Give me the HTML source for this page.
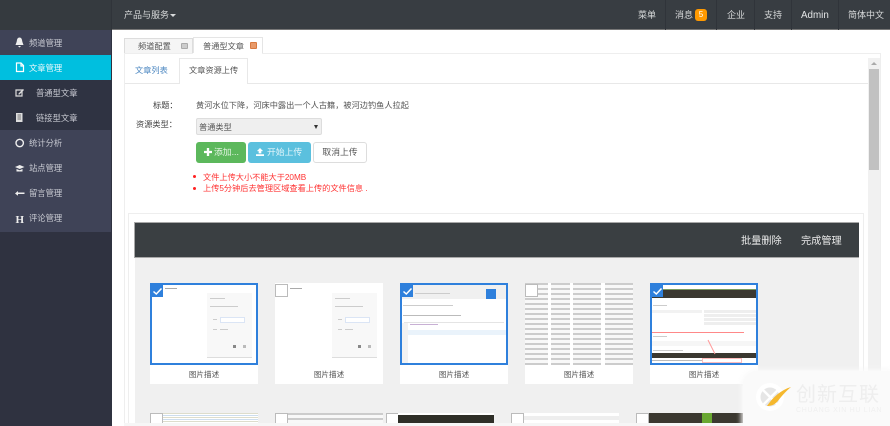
<!DOCTYPE html>
<html lang="zh"><head><meta charset="utf-8">
<style>
html,body{margin:0;padding:0}
body{width:890px;height:426px;overflow:hidden;background:#fff;position:relative;font-family:"Liberation Sans","Noto Sans CJK SC",sans-serif;font-size:8.2px;color:#555}
div,span{position:absolute;box-sizing:border-box;white-space:nowrap}
svg{position:absolute;overflow:visible}
.top{top:1px;height:30px;line-height:29px;color:#d8dadb;font-size:9px}
.sep{top:0;width:1px;height:30px;background:#30343a}
.m{left:0;width:111px;height:25px;background:#3f4357;color:#c8cad2;line-height:25px;font-size:8.3px}
.m.sub{background:#2f3342}
.m .t{left:29px;top:1px}
.m.sub .t{left:36px}
.card{width:108px;height:82px;background:#fff;top:283px}
.cap{top:365px;width:108px;height:19px;background:#fff;text-align:center;line-height:20px;font-size:7.6px;color:#555}
.sel{border:2px solid #2f80dc}
.ck{width:13px;height:13px;top:284px;background:#fff;border:1px solid #bbb}
.ckb{width:13px;height:13px;top:284px;background:#2f80dc}
.li{height:1px;background:#ccc}
.f{font-size:8.2px;line-height:14px}
</style></head><body>

<!-- top bar -->
<div style="left:0;top:0;width:890px;height:30px;background:#383d42;border-bottom:1px solid #777"></div>
<div style="left:0;top:0;width:111px;height:30px;background:#353a3f"></div>
<div style="left:111px;top:0;width:1px;height:30px;background:#30343a"></div>
<div class="top" style="left:124px">产品与服务</div>
<div style="left:170px;top:14px;width:0;height:0;border-left:3px solid transparent;border-right:3px solid transparent;border-top:3px solid #d8dadb"></div>
<div class="top" style="left:638px">菜单</div>
<div class="sep" style="left:665px"></div>
<div class="top" style="left:675px">消息</div>
<div style="left:695px;top:9px;width:12px;height:12px;background:#f90;border-radius:3px;color:#fff;font-size:8px;line-height:12px;text-align:center">5</div>
<div class="sep" style="left:716px"></div>
<div class="top" style="left:727px">企业</div>
<div class="sep" style="left:754px"></div>
<div class="top" style="left:764px">支持</div>
<div class="sep" style="left:791px"></div>
<div class="top" style="left:801px;font-size:9.8px;color:#e4e6e7">Admin</div>
<div class="sep" style="left:838px"></div>
<div class="top" style="left:848px">简体中文</div>

<!-- sidebar -->
<div style="left:0;top:30px;width:112px;height:396px;background:#2f3240"></div>
<div class="m" style="top:30px"><span class="t">频道管理</span></div>
<div class="m" style="top:55px;background:#00bfdf;color:#eaf8fb"><span class="t">文章管理</span></div>
<div class="m sub" style="top:80px"><span class="t">普通型文章</span></div>
<div class="m sub" style="top:105px"><span class="t">链接型文章</span></div>
<div class="m" style="top:130px"><span class="t">统计分析</span></div>
<div class="m" style="top:155px"><span class="t">站点管理</span></div>
<div class="m" style="top:180px"><span class="t">留言管理</span></div>
<div class="m" style="top:205px;height:27px"><span class="t">评论管理</span></div>

<svg style="left:0;top:0" width="30" height="232" viewBox="0 0 30 232">
<path d="M19.5 37.5c1.6 0 2.4 1.4 2.600 3 .2 1.800 1 3.200 1.400 4.500h-8c.4-1.300 1.200-2.700 1.400-4.500.2-1.600 1-3 2.600-3zM18 46h3l-1.500 1.500z" fill="#eee"/>
<path d="M16.500 63h4.500l2.500 2.500V71.500h-7zM21 63v3h2.500" fill="none" stroke="#fff" stroke-width="1.200"/>
<path d="M16 90h6v6h-6z" fill="none" stroke="#ddd" stroke-width="1.200"/><path d="M18.500 93.500l4.500-4.500 1 1-4.500 4.500h-1z" fill="#ddd"/>
<path d="M16 113h6.500v9H16z" fill="#ddd"/><path d="M17.500 115h3.500M17.500 117h3.500M17.500 119h3.500" stroke="#555" stroke-width=".7"/>
<circle cx="19.700" cy="143" r="3.700" fill="none" stroke="#eee" stroke-width="1.400"/>
<path d="M15 167l4.700-2 4.800 2-4.800 2zM16.500 169v2.500h6V169l-2.800 1.200z" fill="#eee"/>
<path d="M15 193.500l3-2.500v1.500h6.500v1.500H18v1.700z" fill="#eee"/>
<text x="15.500" y="223" font-family="Liberation Serif" font-weight="bold" font-size="11" fill="#eee">H</text>
</svg>

<!-- tabs -->
<div style="left:124px;top:38px;width:69px;height:15px;background:#f5f5f5;border:1px solid #ddd;border-bottom:0"></div>
<div style="left:138px;top:39px;line-height:15px;font-size:8.2px;color:#555">频道配置</div>
<div style="left:181px;top:43px;width:7px;height:6px;background:#ccc;border:1px solid #aaa;border-radius:1px"></div>
<div style="left:193px;top:37px;width:70px;height:17px;background:#fff;border:1px solid #e5e5e5;border-bottom:0"></div>
<div style="left:203px;top:39px;line-height:15px;font-size:8.2px;color:#555">普通型文章</div>
<div style="left:250px;top:42px;width:7px;height:7px;background:#e89a6a;border:1px solid #d87a40;border-radius:1px"></div>

<!-- panel -->
<div style="left:124px;top:53px;width:757px;height:373px;border:1px solid #eee;border-bottom:0;background:#fff"></div>
<div style="left:193px;top:53px;width:69px;height:1px;background:#fff"></div>
<div style="left:125px;top:83px;width:743px;height:1px;background:#e8e8e8"></div>
<div class="f" style="left:135px;top:64px;color:#4a86c0">文章列表</div>
<div style="left:179px;top:58px;width:69px;height:26px;background:#fff;border:1px solid #e8e8e8;border-bottom:0"></div>
<div class="f" style="left:189px;top:64px;color:#555">文章资源上传</div>

<!-- scrollbar -->
<div style="left:868px;top:58px;width:12px;height:368px;background:#f1f1f1"></div>
<div style="left:869px;top:69px;width:10px;height:101px;background:#c1c1c1"></div>
<div style="left:871px;top:62px;width:0;height:0;border-left:3px solid transparent;border-right:3px solid transparent;border-bottom:3px solid #aaa"></div>

<!-- form -->
<div class="f" style="left:153px;top:99px;color:#444">标题：</div>
<div class="f" style="left:196px;top:99px;color:#555">黄河水位下降，河床中露出一个人古籍，被河边钓鱼人拉起</div>
<div class="f" style="left:136px;top:118px;color:#444">资源类型：</div>
<div style="left:196px;top:118px;width:126px;height:17px;background:#efefef;border:1px solid #ddd;border-radius:2px;padding-left:2px;line-height:17px;font-size:8.2px;color:#555">普通类型</div>
<div style="left:314px;top:125px;width:0;height:0;border-left:2px solid transparent;border-right:2px solid transparent;border-top:4px solid #333"></div>
<div style="left:196px;top:142px;width:50px;height:21px;background:#5cb85c;border-radius:3px;color:#e6f5e6;font-size:8.8px;line-height:21px;padding-left:18px">添加...</div>
<svg style="left:204px;top:148px" width="8" height="8" viewBox="0 0 9 9"><path d="M3.200 0h2.600v3.200H9v2.600H5.800V9H3.200V5.800H0V3.200h3.200z" fill="#fff"/></svg>
<div style="left:248px;top:142px;width:63px;height:21px;background:#5bc0de;border-radius:3px;color:#e6f6fb;font-size:8.8px;line-height:21px;padding-left:19px">开始上传</div>
<svg style="left:256px;top:148px" width="8" height="8" viewBox="0 0 9 9"><path d="M4.500 0L8 3.500H6V6H3V3.500H1zM0 7h9v2H0z" fill="#fff"/></svg>
<div style="left:313px;top:142px;width:54px;height:21px;background:#fff;border:1px solid #ddd;border-radius:3px;color:#555;font-size:8.8px;line-height:19px;text-align:center">取消上传</div>
<div style="left:193px;top:175px;width:3px;height:3px;background:#f22;border-radius:50%"></div>
<div style="left:193px;top:187px;width:3px;height:3px;background:#f22;border-radius:50%"></div>
<div class="f" style="left:203px;top:171px;color:#f33">文件上传大小不能大于20MB</div>
<div class="f" style="left:203px;top:182px;color:#f33">上传5分钟后去管理区域查看上传的文件信息 .</div>

<!-- manager -->
<div style="left:128px;top:213px;width:736px;height:213px;border:1px solid #eee;background:#fff"></div>
<div style="left:135px;top:258px;width:724px;height:165px;background:#f0f0f0"></div>
<div style="left:134px;top:222px;width:725px;height:36px;background:#3a3f42;border:1px solid #a8a8a8;border-right:0"></div>
<div style="left:741px;top:234px;line-height:15px;font-size:10.2px;color:#e8e8e8">批量删除</div>
<div style="left:801px;top:234px;line-height:15px;font-size:10.2px;color:#e8e8e8">完成管理</div>

<!-- card 1 -->
<div class="card sel" style="left:150px"></div>
<div class="li" style="left:165px;top:288px;width:12px;background:#aaa"></div>
<div style="left:207px;top:293px;width:45px;height:65px;background:#f8f8f8;border-bottom:1px solid #ddd"></div>
<div class="li" style="left:210px;top:298px;width:15px"></div>
<div class="li" style="left:210px;top:306px;width:28px"></div>
<div style="left:220px;top:317px;width:25px;height:6px;background:#fff;border:1px solid #dbe5f5"></div>
<div class="li" style="left:213px;top:319px;width:4px"></div>
<div class="li" style="left:213px;top:329px;width:4px"></div>
<div class="li" style="left:220px;top:329px;width:8px"></div>
<div style="left:233px;top:345px;width:3px;height:3px;background:#888"></div>
<div style="left:243px;top:345px;width:3px;height:3px;background:#bbb"></div>
<div class="ckb" style="left:150px"></div>
<svg style="left:153px;top:288px" width="9" height="7"><path d="M.5 3.500l2.800 2.500L8.500.5" fill="none" stroke="#fff" stroke-width="1.500"/></svg>
<div class="cap" style="left:150px">图片描述</div>

<!-- card 2 -->
<div class="card" style="left:275px"></div>
<div class="li" style="left:290px;top:288px;width:12px;background:#aaa"></div>
<div style="left:332px;top:293px;width:45px;height:65px;background:#f8f8f8;border-bottom:1px solid #ddd"></div>
<div class="li" style="left:335px;top:298px;width:15px"></div>
<div class="li" style="left:335px;top:306px;width:28px"></div>
<div style="left:345px;top:317px;width:25px;height:6px;background:#fff;border:1px solid #dbe5f5"></div>
<div class="li" style="left:338px;top:319px;width:4px"></div>
<div class="li" style="left:338px;top:329px;width:4px"></div>
<div class="li" style="left:345px;top:329px;width:8px"></div>
<div style="left:358px;top:345px;width:3px;height:3px;background:#888"></div>
<div style="left:368px;top:345px;width:3px;height:3px;background:#bbb"></div>
<div class="ck" style="left:275px"></div>
<div class="cap" style="left:275px">图片描述</div>

<!-- card 3 -->
<div class="card sel" style="left:400px"></div>
<div style="left:402px;top:285px;width:104px;height:14px;background:#f0f0f0"></div>
<div style="left:486px;top:289px;width:10px;height:10px;background:#2f80dc"></div>
<div class="li" style="left:415px;top:293px;width:35px"></div>
<div class="li" style="left:403px;top:305px;width:50px"></div>
<div class="li" style="left:403px;top:315px;width:58px;background:#bbb"></div>
<div style="left:404px;top:322px;width:100px;height:1px;background:#e4e4e4"></div>
<div style="left:403px;top:330px;width:103px;height:5px;background:#eaf3fb"></div>
<div style="left:402px;top:323px;width:6px;height:40px;background:#f2f2f2"></div>
<div class="li" style="left:410px;top:324px;width:28px;background:#c8b0d4"></div>
<div class="ckb" style="left:400px"></div>
<svg style="left:403px;top:288px" width="9" height="7"><path d="M.5 3.500l2.800 2.500L8.500.5" fill="none" stroke="#fff" stroke-width="1.500"/></svg>
<div class="cap" style="left:400px">图片描述</div>

<!-- card 4 -->
<div class="card" style="left:525px;background:repeating-linear-gradient(180deg,#ccc 0 2px,#f8f8f8 2px 5px)"></div>
<div style="left:548px;top:283px;width:3px;height:82px;background:#fff"></div>
<div style="left:570px;top:283px;width:3px;height:82px;background:#fff"></div>
<div style="left:601px;top:283px;width:4px;height:82px;background:#fff"></div>
<div class="ck" style="left:525px"></div>
<div class="cap" style="left:525px">图片描述</div>

<!-- card 5 -->
<div class="card sel" style="left:650px"></div>
<div style="left:652px;top:290px;width:104px;height:8px;background:#3b3830"></div>
<div style="left:652px;top:289px;width:104px;height:1px;background:#7a9a60"></div>
<div class="li" style="left:653px;top:305px;width:14px"></div>
<div style="left:652px;top:310px;width:50px;height:3px;background:#f2f2f2"></div>
<div style="left:704px;top:310px;width:52px;height:16px;background:repeating-linear-gradient(180deg,#eee 0 3px,#fff 3px 4px)"></div>
<div style="left:652px;top:332px;width:92px;height:1px;background:#f88"></div>
<div class="li" style="left:653px;top:336px;width:14px"></div>
<div style="left:652px;top:341px;width:104px;height:5px;background:#f6f6f6"></div>
<div class="li" style="left:653px;top:350px;width:30px"></div>
<div style="left:652px;top:353px;width:104px;height:5px;background:#3b3830"></div>
<div style="left:652px;top:360px;width:50px;height:1px;background:#bbb"></div>
<div style="left:702px;top:358px;width:40px;height:5px;border:1px solid #fbb"></div>
<svg style="left:700px;top:338px" width="20" height="20"><path d="M8 2l7 14" stroke="#f99" fill="none"/></svg>
<div class="ckb" style="left:650px"></div>
<svg style="left:653px;top:288px" width="9" height="7"><path d="M.5 3.500l2.800 2.500L8.500.5" fill="none" stroke="#fff" stroke-width="1.500"/></svg>
<div class="cap" style="left:650px">图片描述</div>

<!-- row 2 -->
<div style="left:150px;top:413px;width:108px;height:10px;background:repeating-linear-gradient(180deg,#ddddcc 0 1px,#fff 1px 2px,#cde 2px 3px,#fff 3px 4px)"></div>
<div class="ck" style="left:150px;top:413px"></div>
<div style="left:275px;top:413px;width:108px;height:10px;background:repeating-linear-gradient(180deg,#ccc 0 2px,#f8f8f8 2px 5px)"></div>
<div class="ck" style="left:275px;top:413px"></div>
<div class="ck" style="left:386px;top:413px"></div>
<div style="left:398px;top:413px;width:96px;height:10px;background:#2f2f28"></div>
<div style="left:398px;top:413px;width:96px;height:2px;background:#fff"></div>
<div style="left:511px;top:413px;width:108px;height:10px;background:#fff"></div>
<div class="li" style="left:524px;top:416px;width:95px;background:#eee;height:4px"></div>
<div class="ck" style="left:511px;top:413px"></div>
<div style="left:636px;top:413px;width:107px;height:10px;background:#3b3830"></div>
<div style="left:702px;top:413px;width:10px;height:10px;background:#6aa832"></div>
<div class="ck" style="left:636px;top:413px"></div>
<div style="left:124px;top:423px;width:735px;height:3px;background:#f6f6f6"></div>

<!-- watermark -->
<div style="left:743px;top:371px;width:147px;height:55px;background:#fafafa;border-radius:14px 0 0 0;box-shadow:0 0 5px 2px rgba(250,250,250,.9)"></div>
<svg style="left:754px;top:381px" width="34" height="34" viewBox="0 0 34 34">
<circle cx="16" cy="16" r="14" fill="#fff"/>
<circle cx="16" cy="16" r="9.500" fill="#e6e6e6"/>
<path d="M9 9l15 15M24 9L9 24" stroke="#fff" stroke-width="2.500" fill="none"/>
<path d="M13 25C19 16 27 9 37 6 31 11 27 16 23 21 20 24 17 25 13 25z" fill="#f5b82e"/>
</svg>
<div style="left:796px;top:382px;line-height:26px;font-size:20px;color:#eeeeee;letter-spacing:1px">创新互联</div>
<div style="left:796px;top:406px;line-height:9px;font-size:7px;color:#f0f0f0;letter-spacing:.7px">CHUANG XIN HU LIAN</div>

</body></html>
